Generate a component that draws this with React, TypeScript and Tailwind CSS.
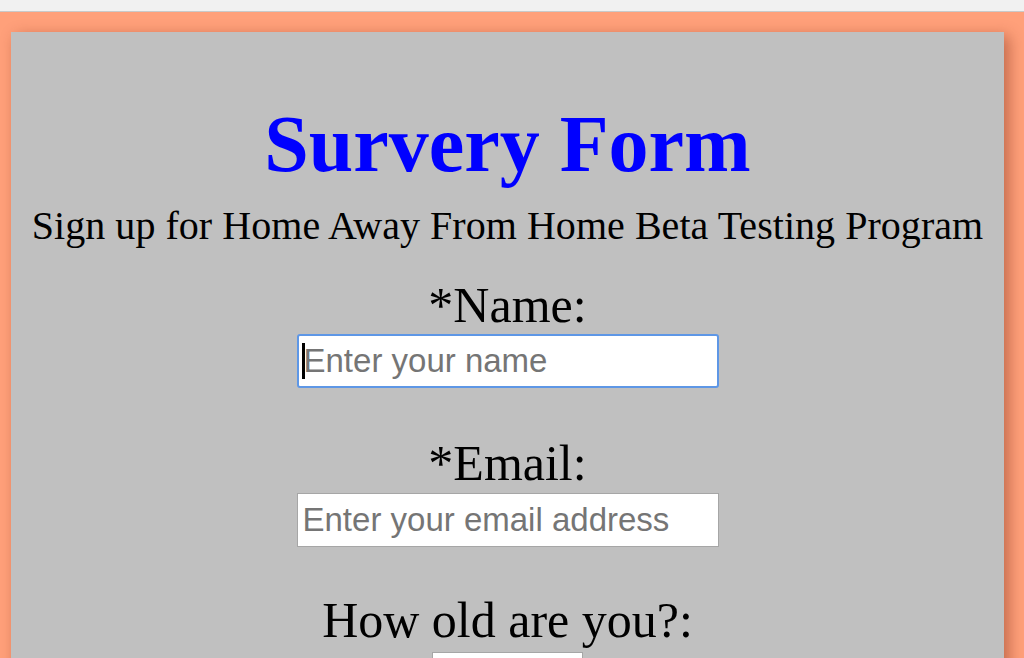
export default function App() {
  return (
    <div className="h-[658px] w-[1024px] overflow-hidden bg-[#ffa07a] font-['Liberation_Serif',serif]">
      <div className="h-[12px] border-b border-[#c9c9c9] bg-[#f1f1f1]" />

      <div className="ml-[11px] mt-[20px] w-[993px] bg-[#c0c0c0] pt-[72px] pb-10 text-center shadow-[5px_4px_14px_rgba(120,40,20,0.45)]">
        <h1 className="text-[80px] leading-[80px] font-bold text-[#0000ff]">Survery Form</h1>
        <p className="mt-[22px] text-[40px] leading-[40px] tracking-[0.04px] text-black">
          Sign up for Home Away From Home Beta Testing Program
        </p>

        <form className="mt-[34px] flex flex-col items-center">
          <label htmlFor="name" className="text-[50px] leading-[50px] text-black">*Name:</label>
          <div className="relative mt-[4px]">
            <input
              id="name"
              type="text"
              placeholder="Enter your name"
              className="h-[54px] w-[422px] rounded-[3px] border-2 border-[#5e97e6] bg-white px-[5px] font-['Liberation_Sans',sans-serif] text-[33px] outline-none placeholder:text-[#757575]"
            />
            {/* caret */}
            <span className="absolute left-[5px] top-[9px] h-[36px] w-[3px] bg-black" />
          </div>

          <label htmlFor="email" className="mt-[50px] text-[50px] leading-[50px] text-black">*Email:</label>
          <input
            id="email"
            type="email"
            placeholder="Enter your email address"
            className="mt-[5px] h-[54px] w-[422px] border border-[#a6a6a6] bg-white px-[5px] font-['Liberation_Sans',sans-serif] text-[33px] outline-none placeholder:text-[#757575]"
          />

          <label htmlFor="age" className="mt-[48px] text-[50px] leading-[50px] text-black">How old are you?:</label>
          <input
            id="age"
            type="number"
            className="mt-[7px] h-[54px] w-[151px] border border-[#a6a6a6] bg-white px-[5px] font-['Liberation_Sans',sans-serif] text-[33px] outline-none"
          />
        </form>
      </div>
    </div>
  )
}
